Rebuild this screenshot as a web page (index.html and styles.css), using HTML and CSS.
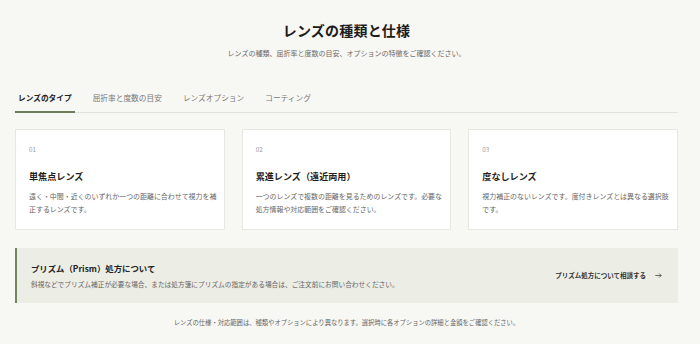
FILE: index.html
```html
<!DOCTYPE html>
<html lang="ja">
<head>
<meta charset="utf-8">
<title>レンズの種類と仕様</title>
<link rel="stylesheet" href="styles.css">
</head>
<body>
<main class="page">
  <header class="head">
    <h1 class="title">レンズの種類と仕様</h1>
    <p class="subtitle">レンズの種類、屈折率と度数の目安、オプションの特徴をご確認ください。</p>
  </header>

  <nav class="tabs">
    <span class="tab active">レンズのタイプ</span>
    <span class="tab">屈折率と度数の目安</span>
    <span class="tab">レンズオプション</span>
    <span class="tab">コーティング</span>
  </nav>

  <section class="cards">
    <article class="card">
      <div class="num">01</div>
      <h2 class="card-title">単焦点レンズ</h2>
      <p class="card-text">遠く・中間・近くのいずれか一つの距離に合わせて視力を補<br>正するレンズです。</p>
    </article>
    <article class="card">
      <div class="num">02</div>
      <h2 class="card-title">累進レンズ（遠近両用）</h2>
      <p class="card-text">一つのレンズで複数の距離を見るためのレンズです。必要な<br>処方情報や対応範囲をご確認ください。</p>
    </article>
    <article class="card">
      <div class="num">03</div>
      <h2 class="card-title">度なしレンズ</h2>
      <p class="card-text">視力補正のないレンズです。度付きレンズとは異なる選択肢<br>です。</p>
    </article>
  </section>

  <section class="prism">
    <div class="prism-body">
      <h3 class="prism-title">プリズム（Prism）処方について</h3>
      <p class="prism-text">斜視などでプリズム補正が必要な場合、または処方箋にプリズムの指定がある場合は、ご注文前にお問い合わせください。</p>
    </div>
    <a class="prism-link" href="#">プリズム処方について相談する
      <svg class="arrow" width="7" height="7" viewBox="0 0 7 7" aria-hidden="true"><path d="M0.3 3.5H6.2M4.2 1.5L6.2 3.5L4.2 5.5" fill="none" stroke="#444" stroke-width="0.8"/></svg>
    </a>
  </section>

  <p class="note">レンズの仕様・対応範囲は、種類やオプションにより異なります。選択時に各オプションの詳細と金額をご確認ください。</p>
</main>
</body>
</html>
```

FILE: styles.css
```css
* { box-sizing: border-box; }
html, body { margin: 0; padding: 0; }
body {
  background: #f7f7f4;
  font-family: "Noto Sans CJK JP", "Noto Sans", sans-serif;
  color: #222;
}
.page {
  width: 663px;
  margin-left: 15px;
  padding-top: 21px;
}
.head { text-align: center; }
.title {
  margin: 0;
  font-size: 14px;
  line-height: 19.6px;
  font-weight: 700;
  color: #1c1c1c;
  letter-spacing: 0.2px;
}
.subtitle {
  margin: 7px 0 0;
  font-size: 7px;
  line-height: 11.2px;
  color: #6a6a6a;
}
.tabs {
  margin-top: 33.5px;
  display: flex;
  gap: 15px;
  border-bottom: 1px solid #e2e2dd;
}
.tab {
  padding: 0 3px 7px;
  font-size: 7.7px;
  line-height: 11.5px;
  color: #777;
  border-bottom: 2px solid transparent;
  margin-bottom: -1px;
}
.tab.active {
  color: #222;
  font-weight: 700;
  border-bottom-color: #6f7c5a;
}
.cards {
  margin-top: 16.3px;
  display: grid;
  grid-template-columns: repeat(3, 1fr);
  gap: 17px;
}
.card {
  background: #fff;
  border: 1px solid #e8e8e3;
  padding: 13px 4px 13px 13px;
}
.num {
  font-size: 6.3px;
  line-height: 14px;
  color: #9a9a9a;
}
.card-title {
  margin: 12.4px 0 0;
  font-size: 9.1px;
  line-height: 14px;
  font-weight: 700;
  color: #1f1f1f;
}
.card-text {
  margin: 7px 0 0;
  font-size: 6.95px;
  line-height: 12.6px;
  color: #666;
}
.prism {
  margin-top: 18px;
  background: #ecede5;
  border-left: 2px solid #76835f;
  padding: 13px 16px 13px 14px;
  display: flex;
  align-items: center;
  justify-content: space-between;
}
.prism-title {
  margin: 0;
  font-size: 8.4px;
  line-height: 14px;
  font-weight: 700;
  color: #222;
}
.prism-text {
  margin: 3px 0 0;
  font-size: 6.7px;
  line-height: 12px;
  color: #666;
}
.prism-link {
  display: flex;
  align-items: center;
  gap: 9px;
  font-size: 6.5px;
  line-height: 10px;
  font-weight: 700;
  color: #333;
  text-decoration: none;
}
.arrow { display: block; }
.note {
  margin: 15px 0 0;
  text-align: center;
  font-size: 6.3px;
  line-height: 10px;
  color: #666;
}
```
